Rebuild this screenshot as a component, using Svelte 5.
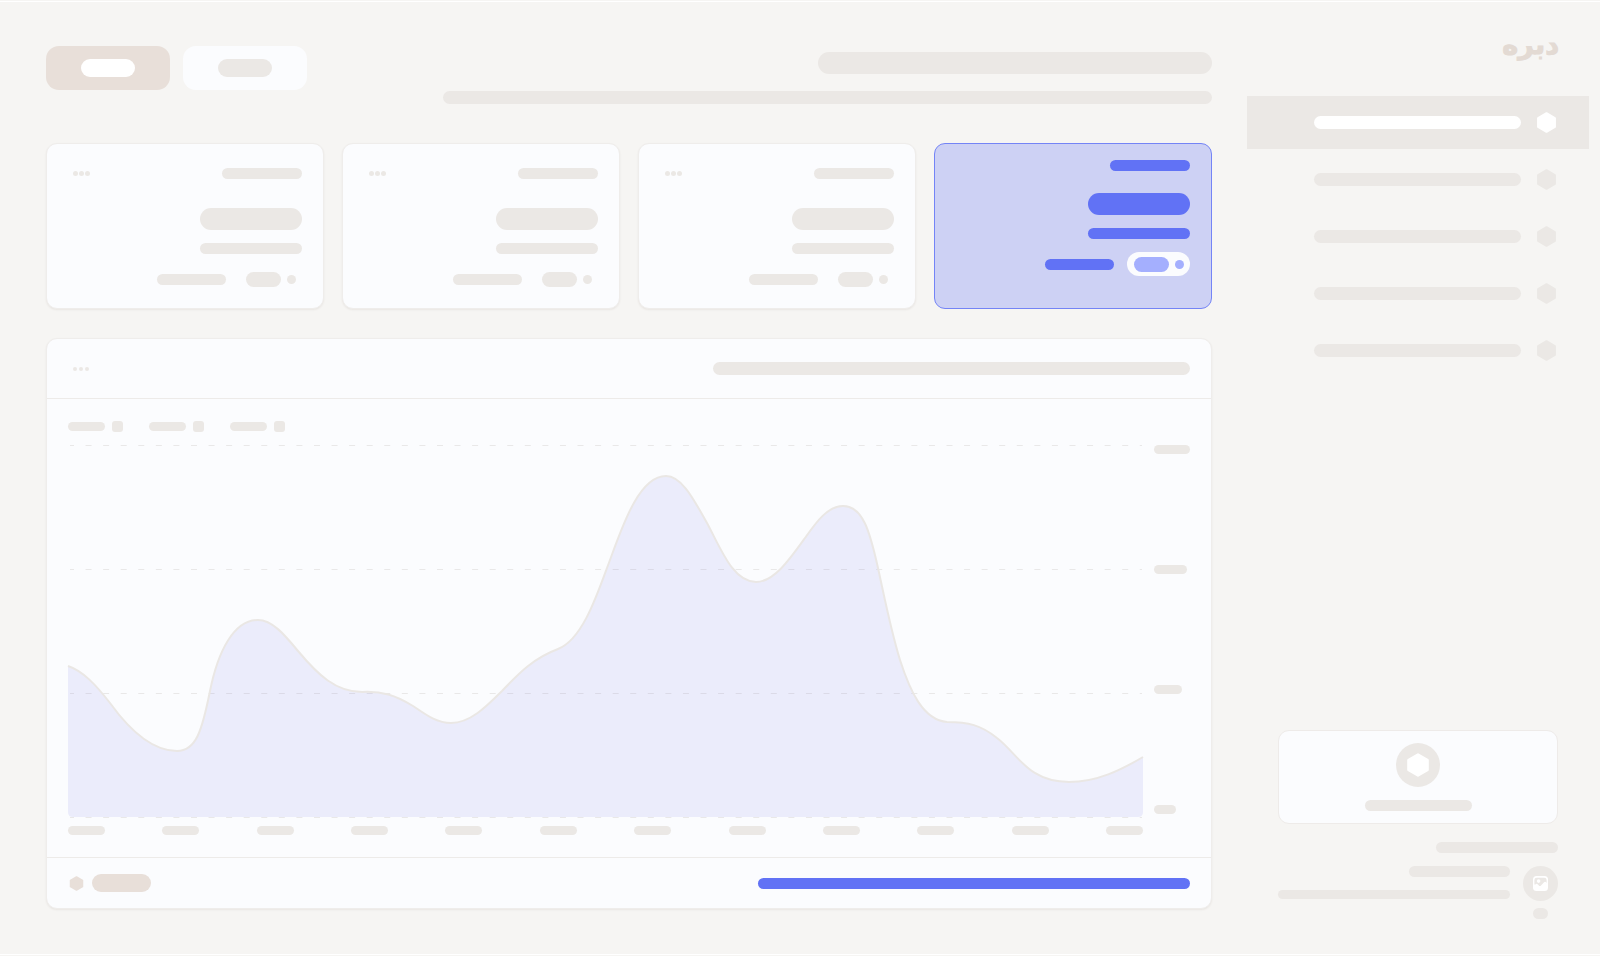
<script lang="ts">
    const navItems = ["overview", "orders", "customers", "reports", "settings"];
    let activeItem = $state("overview");

    const stats = [
        { id: "revenue", highlighted: true },
        { id: "sales", highlighted: false },
        { id: "visits", highlighted: false },
        { id: "returns", highlighted: false },
    ];

    const series = [1, 2, 3];
    const months = Array.from({ length: 12 }, (_, i) => i + 1);
    const tickWidths = [36, 33, 28, 22];
    const gridLines = [1.5, 125.5, 249.5, 373.5];

    const curve = [
        "C15 227 28 241 42 259 C60 284 83 307 109 307",
        "C128 307 134 287 142 247 C150 207 166 176 190 176",
        "C204 176 216 190 230 207 C250 231 268 248 294 248",
        "C314 247 327 251 345 262 C357 270 368 279 383 279",
        "C402 279 418 263 434 247 C452 228 466 214 490 205",
        "C513 196 527 157 539 124 C552 90 569 32 598 32",
        "C615 32 628 60 639 79 C653 105 665 138 688 138",
        "C706 138 722 115 737 94 C747 80 759 62 775 62",
        "C795 62 802 88 810 124 C817 156 823 187 832 216",
        "C842 247 855 276 879 278 C900 278 913 281 929 294",
        "C950 310 960 338 1001 338 C1029 338 1053 326 1075 313",
    ].join(" ");
    const linePath = `M0 222 ${curve}`;
    const areaPath = `${linePath} V368 Q1075 373 1070 373 H5 Q0 373 0 368 Z`;
</script>

{#snippet hexagon(size: number)}
    <svg class="hexagon" width={size} height={size} viewBox="0 0 20 20" aria-hidden="true">
        <path
            d="M10 1.2 L18 5.8 V14.2 L10 18.8 L2 14.2 V5.8 Z"
            fill="currentColor"
            stroke="currentColor"
            stroke-width="2"
            stroke-linejoin="round"
        />
    </svg>
{/snippet}

<div class="page" dir="rtl">
    <aside class="sidebar">
        <div class="logo">دبره</div>

        <nav>
            {#each navItems as item}
                <a
                    href="#{item}"
                    class="nav-item"
                    class:active={activeItem === item}
                    aria-label={item}
                    onclick={() => (activeItem = item)}
                >
                    {@render hexagon(21)}
                    <span class="bar bar-md"></span>
                </a>
            {/each}
        </nav>

        <div class="sidebar-bottom">
            <button class="help" aria-label="help">
                <span class="help-icon">{@render hexagon(24)}</span>
                <span class="bar bar-sm"></span>
            </button>

            <div class="bar bar-sm account-title"></div>

            <div class="account">
                <div class="account-side">
                    <span class="avatar">
                        <svg width="15" height="15" viewBox="0 0 15 15" aria-hidden="true">
                            <rect width="15" height="15" rx="3.5" fill="#fff" />
                            <path
                                d="M1.4 8.6 V4 Q1.4 1.7 3.8 1.7 H11.2 Q13.6 1.7 13.6 4 V7 Q12.2 4.8 10.8 6.6 L8 9.6 Q6.8 10.8 5.6 9.2 L4.6 8.2 Q3.6 7.4 2.4 8.4 Z"
                                fill="#ebe8e5"
                            />
                            <circle cx="5.6" cy="5.1" r="1.8" fill="#fff" />
                        </svg>
                    </span>
                    <span class="bar bar-sm"></span>
                </div>
                <div class="account-text">
                    <span class="bar bar-sm"></span>
                    <span class="bar bar-xs"></span>
                </div>
            </div>
        </div>
    </aside>

    <main>
        <header>
            <div class="heading">
                <div class="bar bar-xl"></div>
                <div class="bar bar-md"></div>
            </div>
            <div class="actions">
                <button class="action" aria-label="filter"><span class="bar"></span></button>
                <button class="action primary" aria-label="create"><span class="bar"></span></button>
            </div>
        </header>

        <section class="stats">
            {#each stats as stat (stat.id)}
                <article class="card stat" class:highlighted={stat.highlighted}>
                    <div class="stat-top">
                        <span class="bar bar-sm"></span>
                        {#if !stat.highlighted}
                            <button class="dots" aria-label="more"><i></i><i></i><i></i></button>
                        {/if}
                    </div>
                    <div class="bar bar-xl stat-value"></div>
                    <div class="bar bar-sm stat-note"></div>
                    <div class="stat-trend">
                        <span class="badge"><i></i><b></b></span>
                        <span class="bar bar-sm"></span>
                    </div>
                </article>
            {/each}
        </section>

        <section class="card chart">
            <div class="chart-header">
                <span class="bar bar-md"></span>
                <button class="dots small" aria-label="more"><i></i><i></i><i></i></button>
            </div>

            <div class="chart-body">
                <div class="legend">
                    {#each series as s (s)}
                        <div class="legend-item">
                            <i></i>
                            <span class="bar bar-xs"></span>
                        </div>
                    {/each}
                </div>

                <div class="plot-row">
                    <div class="y-axis">
                        {#each tickWidths as width}
                            <span class="bar bar-xs" style="width: {width}px"></span>
                        {/each}
                    </div>
                    <div class="plot">
                        <svg viewBox="0 0 1075 374" preserveAspectRatio="none" aria-hidden="true">
                            {#each gridLines as y}
                                <line class="grid" x1="2" x2="1074" y1={y} y2={y} />
                            {/each}
                            <path class="area" d={areaPath} />
                            <path class="line" d={linePath} />
                        </svg>
                        <div class="x-axis">
                            {#each months as month (month)}
                                <span class="bar bar-xs"></span>
                            {/each}
                        </div>
                    </div>
                </div>
            </div>

            <div class="chart-footer">
                <span class="bar bar-sm"></span>
                <a href="#report" class="report-link" aria-label="report">
                    <span class="bar"></span>
                    {@render hexagon(15)}
                </a>
            </div>
        </section>
    </main>
</div>

<style>
    :global(body) {
        margin: 0;
        background: #f6f5f3;
    }

    .page {
        --bar: #ebe8e5;
        --surface: #fbfcfe;
        --tan: #e8dfd9;
        --blue: #6172f5;
        display: flex;
        gap: 35px;
        box-sizing: border-box;
        min-height: calc(100vh - 2px);
        margin-top: 1px;
        padding: 0 11px 0 46px;
        border-top: 1px solid #fff;
        border-bottom: 1px solid #fff;
        background: #f6f5f3;
        font-family: "DejaVu Sans", sans-serif;
    }

    button {
        padding: 0;
        border: none;
        background: none;
        cursor: pointer;
    }

    .bar {
        display: block;
        height: 18px;
        border-radius: 11px;
        background: var(--bar);
    }
    .bar-xs {
        height: 9px;
    }
    .bar-sm {
        height: 11px;
    }
    .bar-md {
        height: 13px;
    }
    .bar-xl {
        height: 22px;
    }

    .hexagon {
        display: block;
        flex: none;
    }

    /* Sidebar */
    .sidebar {
        display: flex;
        flex-direction: column;
        flex: none;
        width: 342px;
    }
    .logo {
        height: 63px;
        padding: 25px 30px 6px;
        color: #e3dad3;
        font-size: 27px;
        font-weight: 700;
        line-height: 36px;
        -webkit-text-stroke: 1px #e3dad3;
    }
    nav {
        display: flex;
        flex-direction: column;
        gap: 4px;
    }
    .nav-item {
        display: flex;
        align-items: center;
        gap: 15px;
        height: 53px;
        padding: 0 32px 0 67px;
        color: var(--bar);
    }
    .nav-item .bar {
        flex: 1;
    }
    .nav-item.active {
        background: var(--bar);
        color: #fff;
    }
    .nav-item.active .bar {
        background: #fff;
    }

    .sidebar-bottom {
        display: flex;
        flex-direction: column;
        gap: 18px;
        margin-top: auto;
        padding: 0 31px 35px;
    }
    .help {
        display: flex;
        flex-direction: column;
        align-items: center;
        gap: 13px;
        padding: 12px;
        border: 1px solid #eeebe9;
        border-radius: 11px;
        background: var(--surface);
    }
    .help-icon {
        display: grid;
        place-items: center;
        width: 44px;
        height: 44px;
        border-radius: 50%;
        background: var(--bar);
        color: #fff;
    }
    .help .bar {
        width: 107px;
    }
    .account-title {
        width: 122px;
    }
    .account {
        display: flex;
        gap: 13px;
        margin-top: -5px;
    }
    .account-side {
        display: flex;
        flex-direction: column;
        align-items: center;
        gap: 7px;
    }
    .account-side .bar {
        width: 15px;
    }
    .avatar {
        display: grid;
        place-items: center;
        width: 35px;
        height: 35px;
        border-radius: 50%;
        background: var(--bar);
    }
    .account-text {
        display: flex;
        flex-direction: column;
        flex: 1;
        gap: 13px;
    }
    .account-text .bar-sm {
        width: 101px;
    }

    /* Main column */
    main {
        display: flex;
        flex-direction: column;
        flex: 1;
        min-width: 0;
        padding: 44px 0;
    }
    header {
        display: flex;
        justify-content: space-between;
        gap: 40px;
        margin-bottom: 39px;
    }
    .heading {
        display: flex;
        flex-direction: column;
        flex: 0 1 769px;
        gap: 17px;
        padding-top: 6px;
    }
    .heading .bar-xl {
        width: 394px;
        max-width: 100%;
    }
    .actions {
        display: flex;
        gap: 13px;
    }
    .action {
        display: grid;
        place-items: center;
        width: 124px;
        height: 44px;
        border-radius: 13px;
        background: var(--surface);
    }
    .action .bar {
        width: 54px;
    }
    .action.primary {
        background: var(--tan);
    }
    .action.primary .bar {
        background: #fff;
    }

    .card {
        border: 1px solid #efedeb;
        border-radius: 11px;
        background: var(--surface);
        box-shadow: 0 1px 2px rgba(90, 70, 50, 0.08);
    }

    .stats {
        display: grid;
        grid-template-columns: repeat(4, 1fr);
        gap: 18px;
        margin-bottom: 29px;
    }
    .stat {
        padding: 16px 21px 17px;
    }
    .stat-top {
        display: flex;
        align-items: center;
        justify-content: space-between;
        margin-bottom: 22px;
    }
    .stat-top .bar {
        width: 80px;
    }
    .stat-value {
        width: 102px;
        margin-bottom: 13px;
    }
    .stat-note {
        width: 102px;
        margin-bottom: 13px;
    }
    .stat-trend {
        display: flex;
        align-items: center;
        gap: 13px;
    }
    .stat-trend .bar {
        width: 69px;
    }
    .badge {
        display: flex;
        align-items: center;
        gap: 6px;
        height: 24px;
        padding: 0 6px 0 7px;
        border-radius: 12px;
    }
    .badge i {
        width: 9px;
        height: 9px;
        border-radius: 50%;
        background: var(--bar);
    }
    .badge b {
        width: 35px;
        height: 15px;
        border-radius: 8px;
        background: var(--bar);
    }

    .stat.highlighted {
        border-color: #7484f6;
        background: #cdd1f4;
        box-shadow: none;
    }
    .highlighted .bar {
        background: var(--blue);
    }
    .highlighted .badge {
        background: var(--surface);
    }
    .highlighted .badge i,
    .highlighted .badge b {
        background: #a4affe;
    }

    .dots {
        display: flex;
        align-items: center;
        justify-content: center;
        gap: 1px;
        width: 26px;
        height: 26px;
    }
    .dots i {
        width: 5px;
        height: 5px;
        border-radius: 50%;
        background: var(--bar);
    }
    .dots.small {
        gap: 2px;
    }
    .dots.small i {
        width: 4px;
        height: 4px;
    }

    /* Chart panel */
    .chart-header {
        display: flex;
        align-items: center;
        justify-content: space-between;
        height: 59px;
        padding: 0 21px;
        border-bottom: 1px solid #edebe9;
    }
    .chart-header .bar {
        width: 42.5%;
    }
    .chart-body {
        display: flex;
        flex-direction: column;
        gap: 12px;
        padding: 22px 21px;
    }
    .legend {
        display: flex;
        justify-content: flex-end;
        gap: 26px;
    }
    .legend-item {
        display: flex;
        align-items: center;
        gap: 7px;
    }
    .legend-item i {
        width: 11px;
        height: 11px;
        border-radius: 3px;
        background: var(--bar);
    }
    .legend-item .bar {
        width: 37px;
    }
    .plot-row {
        display: flex;
        gap: 11px;
    }
    .y-axis {
        display: flex;
        flex-direction: column;
        align-items: flex-end;
        justify-content: space-between;
        width: 36px;
        padding: 1px 0 21px;
    }
    .plot {
        flex: 1;
        min-width: 0;
    }
    .plot svg {
        display: block;
        width: 100%;
        height: 374px;
        overflow: visible;
    }
    .grid {
        stroke: #e9e8e8;
        stroke-width: 1;
        stroke-dasharray: 6 11.57;
        stroke-dashoffset: 2;
    }
    .area {
        fill: #5f63e0;
        fill-opacity: 0.1;
    }
    .line {
        fill: none;
        stroke: #eae7e4;
        stroke-width: 2;
        vector-effect: non-scaling-stroke;
    }
    .x-axis {
        display: flex;
        justify-content: space-between;
        margin-top: 8px;
    }
    .x-axis .bar {
        width: 37px;
    }
    .chart-footer {
        display: flex;
        align-items: center;
        justify-content: space-between;
        height: 50px;
        padding: 0 21px;
        border-top: 1px solid #edebe9;
    }
    .chart-footer > .bar {
        width: 38.5%;
        background: var(--blue);
    }
    .report-link {
        display: flex;
        align-items: center;
        gap: 8px;
        padding-left: 1px;
        color: var(--tan);
    }
    .report-link .bar {
        width: 59px;
        background: var(--tan);
    }
</style>
